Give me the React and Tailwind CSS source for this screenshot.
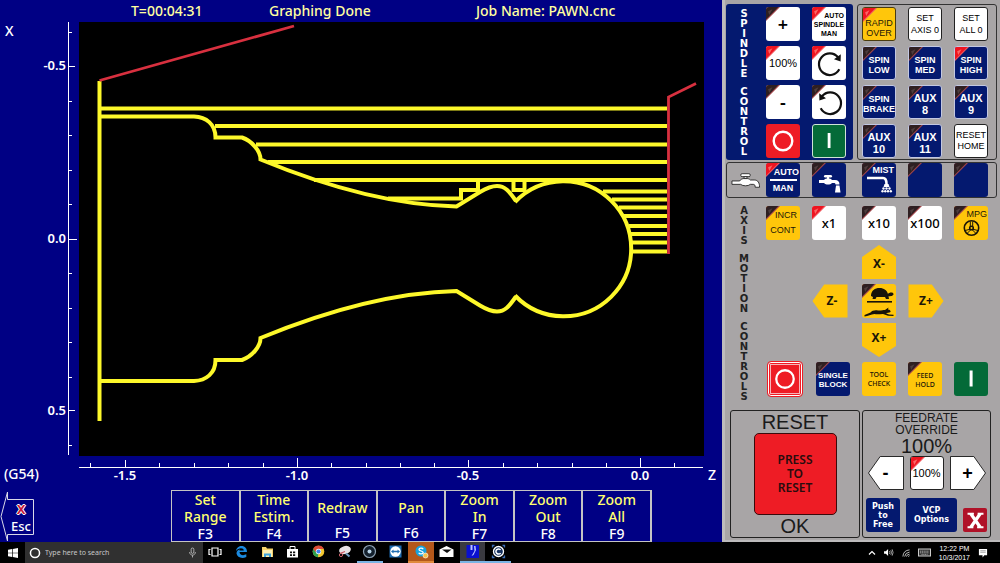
import React from "react";
import clsx from "clsx";

const TONES = {
  white: "bg-white text-black",
  outlined: "bg-white text-black border border-[#222]",
  navy: "bg-[#04196f] text-white border border-[#c3c8e2]",
  flatNavy: "bg-[#04196f] text-white",
  yellow: "bg-[#ffc60b] text-[#1c1608]",
  outlinedYellow: "bg-[#ffc60b] text-[#1c1608] border border-[#4a3c10]",
  red: "bg-[#ee1c25] text-white",
  green: "bg-[#046a38] text-white",
};

function Led({ on }) {
  return (
    <svg viewBox="0 0 13 13" className="absolute left-0 top-0 size-[14px]" aria-hidden="true">
      <path d="M0 0H13L0 13Z" fill={on ? "#f0565c" : "#a0454b"} />
      <path d="M0 0H11.500L0 11.500Z" fill={on ? "#ee1420" : "#2e1f21"} />
      <path d="M2 4L6 2L3 7.500Z" fill={on ? "#ff8a84" : "#5b4a4c"} opacity="0.7" />
    </svg>
  );
}

function Key({ tone = "white", led, label, className, children }) {
  return (
    <button
      type="button"
      aria-label={label}
      className={clsx(
        "relative flex size-[34px] flex-col items-center justify-center overflow-hidden whitespace-nowrap rounded-[3px]",
        TONES[tone],
        className
      )}
    >
      {led && <Led on={led === "on"} />}
      {children}
    </button>
  );
}

function Lines({ items, className }) {
  return (
    <span className={clsx("relative flex flex-col items-center", className)}>
      {items.map((t) => (
        <span key={t}>{t}</span>
      ))}
    </span>
  );
}

function VerticalLabel({ words, className }) {
  return (
    <h2
      className={clsx(
        "mr-1 flex w-9 flex-col items-center gap-2 font-['DejaVu_Sans',sans-serif] text-[10px] font-bold leading-[10px]",
        className
      )}
    >
      {words.map((w) => (
        <span key={w} className="w-[10px] break-all text-center">
          {w}
        </span>
      ))}
    </h2>
  );
}

function SpinArrow({ reverse }) {
  return (
    <svg viewBox="0 0 34 34" className="absolute inset-0 size-full" aria-hidden="true">
      <g transform={reverse ? "translate(36 0) scale(-1 1)" : undefined}>
        <path d="M27.3 23.3A10.8 10.8 0 1 1 26 11.2" fill="none" stroke="#111" strokeWidth="2.2" />
        <path d="M28.8 8.2L28.6 15.6L22 13.2Z" fill="#111" />
      </g>
    </svg>
  );
}

const StopRing = () => (
  <svg viewBox="0 0 34 34" className="absolute inset-0 size-full" aria-hidden="true">
    <circle cx="17" cy="17" r="9.3" fill="none" stroke="#fff" strokeWidth="2.4" />
  </svg>
);

const StartBar = () => (
  <svg viewBox="0 0 34 34" className="absolute inset-0 size-full" aria-hidden="true">
    <rect x="15.6" y="8.5" width="3" height="16" fill="#fff" />
  </svg>
);

function JogKey({ dir, tone, label, className }) {
  const shapes = {
    up: "M17 0L34 12V34H0V12Z",
    down: "M0 0H34V23L17 34L0 23Z",
    left: "M0 17L12 0H36V34H12Z",
    right: "M0 0H24L36 17L24 34H0Z",
  };
  const wide = dir === "left" || dir === "right";
  return (
    <button
      type="button"
      className={clsx("relative flex h-[34px] items-center justify-center", wide ? "w-[36px]" : "w-[34px]", className)}
    >
      <svg viewBox={wide ? "-0.5 -0.5 37 35" : "0 0 34 34"} preserveAspectRatio="none" className="absolute inset-0 size-full" aria-hidden="true">
        <path d={shapes[dir]} fill={tone === "white" ? "#fff" : "#ffc60b"} stroke={tone === "white" ? "#222" : "none"} />
      </svg>
      <span className="relative">{label}</span>
    </button>
  );
}

/* ---------- graph ---------- */

const X_TICKS_MINOR = [90, 159, 194, 228, 263, 331, 366, 400, 434, 503, 537, 572, 606, 674];
const Y_TICKS_MINOR = [32, 101, 135, 170, 204, 273, 308, 342, 377, 445];
const PASSES = [
  [99, 108.5], [215, 126], [256, 144.5], [268, 162], [314, 180],
  [603, 191.5], [612, 199.5], [619, 207.5], [624, 216], [629, 226], [630, 234], [631, 242.5], [631, 251.5],
];
const PROFILE =
  "M99 116.5H194C206 117 215.5 124 215.5 137.5H242C252 141 260.5 151 260.5 159.5C320 184 390 205 456.5 206.5L480 192Q490 186 497 186C505 186 509 191 516 201";

function Graph() {
  return (
    <svg
      viewBox="0 22 722 465"
      className="block h-auto w-full font-['Noto_Sans',sans-serif]"
      role="img"
      aria-label="Tool path graph of PAWN.cnc"
    >
      <rect x="79" y="22" width="625" height="434" fill="#000" />
      <g stroke="#fff" strokeWidth="1">
        <path d="M68.5 22V455M68.5 66.5H75M68.5 239.5H77M68.5 410.5H75" />
        {Y_TICKS_MINOR.map((y) => <path key={y} d={`M68.5 ${y + 0.5}H72`} />)}
        <path d="M79 467.5H703M125.5 460V467M297.5 458V467M468.5 460V467M640.5 458V467" />
        {X_TICKS_MINOR.map((x) => <path key={x} d={`M${x + 0.5} 463V467`} />)}
      </g>
      <g fill="#fff" fontSize="13" fontWeight="600">
        <g textAnchor="end">
          <text x="66" y="70">-0.5</text>
          <text x="66" y="243">0.0</text>
          <text x="66" y="415">0.5</text>
        </g>
        <g textAnchor="middle">
          <text x="125" y="480">-1.5</text>
          <text x="297" y="480">-1.0</text>
          <text x="468" y="480">-0.5</text>
          <text x="640" y="480">0.0</text>
        </g>
      </g>
      <g fill="#fff" fontSize="14" fontWeight="500">
        <text x="5" y="36">X</text>
        <text x="708" y="480">Z</text>
        <text x="4" y="479">(G54)</text>
      </g>
      <g fill="none" stroke="#fdf82a" strokeWidth="4">
        <path d="M99.5 81V421" />
        {PASSES.map(([x, y]) => <path key={y} d={`M${x} ${y}H667`} />)}
        <path d={PROFILE} />
        <path d={PROFILE} transform="translate(0 497.5) scale(1 -1)" />
        <path d="M515 202A67.5 67.5 0 1 1 515 295.5" />
        <path d="M388 198.5H461V190H478V180M513.5 180V190H524.5V180" />
      </g>
      <path d="M99.5 80.5L294 26M668.5 254V97L696 83.5" fill="none" stroke="#d8303f" strokeWidth="2.8" />
    </svg>
  );
}

const FUNCTION_KEYS = [
  ["F3", ["Set", "Range"]],
  ["F4", ["Time", "Estim."]],
  ["F5", ["Redraw"]],
  ["F6", ["Pan"]],
  ["F7", ["Zoom", "In"]],
  ["F8", ["Zoom", "Out"]],
  ["F9", ["Zoom", "All"]],
];

function GraphScreen() {
  return (
    <main className="flex min-w-0 flex-1 flex-col bg-[#000084] font-['Noto_Sans',sans-serif]">
      <header className="grid h-[22px] grid-cols-[138px_207px_auto] items-center pl-[131px] text-[14px] font-medium leading-[20px] text-[#ffffa0]">
        <span>T=00:04:31</span>
        <span>Graphing Done</span>
        <span>Job Name: PAWN.cnc</span>
      </header>
      <Graph />
      <div className="mt-auto grid grid-cols-[171px_1fr_70px] pt-[3px]">
        <button type="button" className="relative flex h-[52px] w-[35px] flex-col items-center justify-center pl-[7px] pt-1 text-white">
          <svg viewBox="0 0 35 52" className="absolute inset-0 size-full" aria-hidden="true">
            <path d="M1 26.5L7.5 2V9.5H33.500V44.500H7.500V51Z" fill="none" stroke="#d8d8e8" />
          </svg>
          <span className="relative text-[13px] font-bold leading-[17px] text-[#c8193c] [text-shadow:1px_0_#fff,-1px_0_#fff,0_1px_#fff,0_-1px_#fff]">X</span>
          <span className="relative text-[13px] font-medium leading-[17px]">Esc</span>
        </button>
        <div className="grid grid-cols-7 border-l border-[#c4c4c4]">
          {FUNCTION_KEYS.map(([key, label]) => (
            <button
              key={key}
              type="button"
              className="flex h-[52px] flex-col items-center border-y border-r-2 border-[#c4c4c4] text-[14px] font-medium leading-[17px] text-[#ffff70]"
            >
              <span className="flex h-[34px] flex-col items-center justify-center">
                {label.map((l) => <span key={l}>{l}</span>)}
              </span>
              <span className="text-white">{key}</span>
            </button>
          ))}
        </div>
      </div>
    </main>
  );
}

/* ---------- operator panel ---------- */

const GRID = "grid grid-cols-[34px_38px_34px_34px_34px] content-start gap-x-3 gap-y-[5px]";

const FAUCET = "M1 13H9C10 11 12 10.500 14 10.500H16C18 10.500 19 11 20 12H24C28 12 29.500 15 29.500 19.500H25C25 17.500 24.500 16.500 23 16.500H20C18 18.500 12 18.500 10 16.500H1Z";

function SpindleSection() {
  const sign = "relative font-['Noto_Sans',sans-serif] text-[18px] font-semibold leading-[20px]";
  return (
    <section className="flex rounded-[3px] bg-[#04196f] pb-[2px] pr-[7px] pt-[3px]">
      <VerticalLabel words={["SPINDLE", "CONTROL"]} className="pt-[2px] text-white" />
      <div className="grid grid-cols-2 gap-x-3 gap-y-[5px]">
        <Key led="off"><span className={sign}>+</span></Key>
        <Key led="on">
          <span className="relative flex w-full flex-col text-center text-[7px] font-bold leading-[9px]">
            <span className="pr-[2px] text-right">AUTO</span>
            <span>SPINDLE</span>
            <span>MAN</span>
          </span>
        </Key>
        <Key led="on"><span className="relative text-[11px]">100%</span></Key>
        <Key led="on" label="Spindle clockwise"><SpinArrow /></Key>
        <Key led="off"><span className={sign}>-</span></Key>
        <Key led="off" label="Spindle counter-clockwise"><SpinArrow reverse /></Key>
        <Key tone="red" label="Spindle stop"><StopRing /></Key>
        <Key tone="green" label="Spindle start" className="border border-[#cfe3d6]"><StartBar /></Key>
      </div>
    </section>
  );
}

function AuxSection() {
  const bold = "text-[9px] font-bold leading-[10px] pt-1";
  const aux = "text-[11px] font-bold leading-[12px] pt-1";
  return (
    <section className="flex-1 rounded-[3px] border border-[#333] pb-px pl-1 pt-[2px]">
      <div className="grid grid-cols-[34px_34px_34px] gap-x-3 gap-y-[5px]">
        <Key tone="outlinedYellow" led="on"><Lines items={["RAPID", "OVER"]} className="pt-2 text-[9px] leading-[10px]" /></Key>
        <Key tone="outlined"><Lines items={["SET", "AXIS 0"]} className="text-[9px] leading-[12px]" /></Key>
        <Key tone="outlined"><Lines items={["SET", "ALL 0"]} className="text-[9px] leading-[12px]" /></Key>
        <Key tone="navy" led="off"><Lines items={["SPIN", "LOW"]} className={bold} /></Key>
        <Key tone="navy" led="off"><Lines items={["SPIN", "MED"]} className={bold} /></Key>
        <Key tone="navy" led="on"><Lines items={["SPIN", "HIGH"]} className={bold} /></Key>
        <Key tone="navy" led="off"><Lines items={["SPIN", "BRAKE"]} className={bold} /></Key>
        <Key tone="navy" led="off"><Lines items={["AUX", "8"]} className={aux} /></Key>
        <Key tone="navy" led="off"><Lines items={["AUX", "9"]} className={aux} /></Key>
        <Key tone="navy" led="off"><Lines items={["AUX", "10"]} className={aux} /></Key>
        <Key tone="navy" led="off"><Lines items={["AUX", "11"]} className={aux} /></Key>
        <Key tone="outlined"><Lines items={["RESET", "HOME"]} className="text-[9px] leading-[11px]" /></Key>
      </div>
    </section>
  );
}

function CoolantSection() {
  return (
    <section className="mt-[2px] flex items-center rounded-[3px] border border-[#333]">
      <div className="flex w-[39px] justify-center pr-[1px]">
        <svg viewBox="0 0 31 24" className="h-[24px] w-[30px]" aria-label="Coolant">
          <g fill="#fff" stroke="#222" strokeWidth="0.9">
            <path d={FAUCET} />
            <path d="M13.500 10.500V8.500H16.500V10.500Z" />
            <rect x="10" y="5.500" width="10" height="3" rx="1.500" />
          </g>
        </svg>
      </div>
      <div className={GRID}>
        <Key tone="flatNavy" led="on">
          <span className="relative flex w-full flex-col items-center text-[9px] font-bold leading-[12px]">
            <span className="w-full pr-px text-right">AUTO</span>
            <span className="my-px h-[2px] w-[27px] bg-white" />
            <span>MAN</span>
          </span>
        </Key>
        <Key tone="flatNavy" led="off" label="Flood coolant">
          <svg viewBox="0 0 34 34" className="absolute inset-0 size-full" aria-hidden="true">
            <g fill="#fff">
              <path d="M7 17H12C13 15.500 14 15.500 16 15.500S19 15.500 20 17H23C26 17 27.500 18.500 27.500 21.500H23.500C23.500 20.500 23 20 22 20H20C18 22 14 22 12 20H7Z" />
              <path d="M15 16V13.500H17V16Z" />
              <rect x="12" y="12" width="8" height="2.400" rx="1.200" />
              <path d="M24 22.500H27.500L28.500 29.500H23Z" />
            </g>
          </svg>
        </Key>
        <Key tone="flatNavy" led="off">
          <svg viewBox="0 0 34 34" className="absolute inset-0 size-full" aria-hidden="true">
            <path d="M5 15H21C23.500 15 24.500 16.500 24.500 21" fill="none" stroke="#fff" strokeWidth="2.600" />
            <g fill="#fff">
              <path d="M22.500 21H26.500L27.500 24H21.500Z" />
              {[[21.5, 25.5], [24.5, 25.5], [27.5, 25.5], [20.5, 28.2], [23.3, 28.2], [26, 28.2], [28.8, 28.2]].map(([x, y]) => (
                <circle key={`${x}-${y}`} cx={x} cy={y} r="1.2" />
              ))}
            </g>
          </svg>
          <span className="relative mb-auto w-full pr-[2px] pt-[2px] text-right text-[9px] font-bold leading-[11px]">MIST</span>
        </Key>
        <Key tone="flatNavy" led="off" label="Unassigned 1" />
        <Key tone="flatNavy" led="off" label="Unassigned 2" />
      </div>
    </section>
  );
}

function SpeedKey() {
  return (
    <Key tone="yellow" led="off" label="Slow / fast jog" className="col-start-3 row-start-3">
      <svg viewBox="0 0 34 34" className="absolute inset-0 size-full" aria-hidden="true">
        <g fill="#17130a">
          <path d="M9 12C9 6.500 13 4 17.500 4S25 6.500 26 10C27 8.300 31 7.800 31.500 10C31.500 12 28.500 12.300 26.500 12.300L27 15H24L23 13H14.500L13.500 15H10.500L11 13Z" />
          <path d="M2.500 31L8.500 28.500C10 26.500 13 26 16 26.500C19 26.800 21 26 23 26L26.500 23.500L26 25.500C28 25.500 29 27 28.500 28C27 29 25 28.500 24 29.300L27 30.500L31.500 30.800V32L26 31.700L21 30C18 30 15 30.800 12.500 30C9 30.500 6 32 2.500 32.500Z" />
        </g>
        <rect x="5" y="17" width="25" height="1.600" fill="#17130a" />
      </svg>
    </Key>
  );
}

function AxisSection() {
  const num = "relative font-['Noto_Sans',sans-serif] text-[13px] font-medium leading-[18px]";
  const jog = "font-['Noto_Sans',sans-serif] text-[12px] font-bold text-[#1c1608]";
  return (
    <section className="flex pt-2">
      <VerticalLabel words={["AXIS", "MOTION", "CONTROLS"]} className="text-[#222]" />
      <div className={GRID}>
        <Key tone="yellow" led="off">
          <span className="relative flex w-full flex-col text-[9px] leading-[15px]">
            <span className="pr-[3px] text-right">INCR</span>
            <span>CONT</span>
          </span>
        </Key>
        <Key led="on"><span className={num}>x1</span></Key>
        <Key led="off"><span className={num}>x10</span></Key>
        <Key led="off"><span className={num}>x100</span></Key>
        <Key tone="yellow" led="off">
          <span className="relative mb-auto w-full pr-px pt-[3px] text-right text-[9px] leading-[11px]">MPG</span>
          <svg viewBox="0 0 34 34" className="absolute inset-0 size-full" aria-hidden="true">
            <g fill="none" stroke="#1c1608" strokeWidth="1.600">
              <circle cx="17.500" cy="22" r="7.200" />
              <circle cx="17.500" cy="22" r="1.800" />
              <path d="M16.300 15.500V20.500M18.700 15.500V20.500M11 24.500L16 23.300M13 27.500L16.500 24M24 24.500L19 23.300M22 27.500L18.500 24" strokeWidth="1" />
            </g>
          </svg>
        </Key>

        <JogKey dir="up" label="X-" className={clsx(jog, "col-start-3 row-start-2 pt-1")} />
        <JogKey dir="left" label="Z-" className={clsx(jog, "col-start-2 row-start-3 pl-1")} />
        <SpeedKey />
        <JogKey dir="right" label="Z+" className={clsx(jog, "col-start-4 row-start-3")} />
        <JogKey dir="down" label="X+" className={clsx(jog, "col-start-3 row-start-4 pb-1")} />

        <Key tone="red" label="Cycle cancel" className="row-start-5 ml-[2px] border border-white outline-1 outline-[#ee1c25]">
          <span className="absolute inset-[1px] border border-[#f7b4b8]" />
          <StopRing />
        </Key>
        <Key tone="flatNavy" led="off" className="ml-1 row-start-5"><Lines items={["SINGLE", "BLOCK"]} className="pt-[2px] text-[8px] font-bold leading-[9px]" /></Key>
        <Key tone="yellow" className="row-start-5"><Lines items={["TOOL", "CHECK"]} className="font-['Noto_Sans',sans-serif] text-[7px] font-medium leading-[9px]" /></Key>
        <Key tone="yellow" led="off" className="row-start-5"><Lines items={["FEED", "HOLD"]} className="pt-[2px] font-['Noto_Sans',sans-serif] text-[7px] font-medium leading-[9px]" /></Key>
        <Key tone="green" label="Cycle start" className="row-start-5"><StartBar /></Key>
      </div>
    </section>
  );
}

function ResetSection() {
  return (
    <section className="flex w-[130px] flex-col items-center rounded-[3px] border border-[#222] text-[#1a1a1a]">
      <h2 className="text-[20px] leading-[22px]">RESET</h2>
      <button
        type="button"
        className="flex size-[83px] flex-col items-center justify-center rounded-[5px] border border-[#3a0a0c] bg-[#ee1c25] font-['Noto_Sans',sans-serif] text-[12px] font-semibold leading-[14px] text-[#2a0c0e]"
      >
        <span>PRESS</span>
        <span>TO</span>
        <span>RESET</span>
      </button>
      <p className="text-[20px] leading-[22px]">OK</p>
    </section>
  );
}

function FeedrateSection() {
  const heavy = "font-['DejaVu_Sans',sans-serif] text-[8px] font-bold leading-[9px]";
  return (
    <section className="flex w-[129px] flex-col items-center rounded-[3px] border border-[#222] px-1 text-[#1a1a1a]">
      <h2 className="flex flex-col items-center pt-px text-[12px] leading-[12px]">
        <span>FEEDRATE</span>
        <span>OVERRIDE</span>
      </h2>
      <output className="text-[20px] leading-[20px]">100%</output>
      <div className="flex gap-[6px] text-[18px] font-bold leading-none text-black">
        <JogKey dir="left" tone="white" label="-" />
        <Key tone="outlined" led="on" className="font-normal"><span className="relative text-[11px]">100%</span></Key>
        <JogKey dir="right" tone="white" label="+" />
      </div>
      <div className="mt-2 flex items-end gap-[6px]">
        <Key tone="flatNavy"><Lines items={["Push", "to", "Free"]} className={heavy} /></Key>
        <Key tone="flatNavy" className="w-[51px]"><Lines items={["VCP", "Options"]} className={heavy} /></Key>
        <button type="button" className="flex size-[24px] items-center justify-center rounded-[2px] bg-[#b01228]" aria-label="Close panel">
          <svg viewBox="0 0 16 16" className="size-[17px]" aria-hidden="true">
            <path d="M3.500 1.500L12.500 14.500M12.500 1.500L3.500 14.500" stroke="#fff" strokeWidth="3.200" />
            <path d="M.5 1.700H6.500M10 1.700H15.500M.5 14.300H6M9.500 14.300H15.500" stroke="#fff" strokeWidth="1.800" />
          </svg>
        </button>
      </div>
    </section>
  );
}

function OperatorPanel() {
  return (
    <aside className="w-[278px] shrink-0 border-b-2 border-l-[3px] border-[#bdbbbc] bg-[#a8a5a6] pb-[2px] pl-px pr-[3px] pt-1 font-['Liberation_Sans',sans-serif]">
      <div className="flex gap-1">
        <SpindleSection />
        <AuxSection />
      </div>
      <CoolantSection />
      <AxisSection />
      <div className="ml-1 mt-2 flex h-[128px] gap-[2px]">
        <ResetSection />
        <FeedrateSection />
      </div>
    </aside>
  );
}

/* ---------- taskbar ---------- */

const APPS = [
  { name: "Task view", art: <path d="M4 4H10V12H4ZM2.500 5.500H1V10.500H2.500M11.500 5.500H13V10.500H11.500" fill="none" stroke="#fff" strokeWidth="1.200" /> },
  { name: "Edge", art: <path d="M2 7C2.500 3.500 5 2 7.500 2C11 2 13 4.500 13 8H5.500C5.500 11 9 12 12.300 10.300V13C8 15 3 13.500 2.500 9.500C2.500 7.500 4 6 5.800 5.300C5.500 6 5.400 6.300 5.400 6.600H9.800C9.600 3.300 4.500 3.500 2 7Z" fill="#1b8ae0" /> },
  { name: "File Explorer", art: <g><path d="M2 3H6L7 4.500H13V13H2Z" fill="#f5d26a" /><path d="M3 6H12V13H3Z" fill="#fdf0b6" /><path d="M4 9.500H11V13H9V11.500H6V13H4Z" fill="#3fa4dc" /></g> },
  { name: "Store", art: <g><path d="M2 5H13V13.500H2Z" fill="#fff" /><path d="M5 5V2.500H10V5" fill="none" stroke="#fff" /><path d="M5 7.500H7V9.300H5ZM8 7.500H10.200V9.300H8ZM5 10.200H7V12H5ZM8 10.200H10.200V12H8Z" fill="#111" /></g> },
  { name: "Chrome", art: <g><circle cx="7.500" cy="7.500" r="5.800" fill="#f2c62f" /><path d="M7.500 7.500L2.500 4.600A5.800 5.800 0 0 0 7 13.300Z" fill="#2fa04e" /><path d="M2.300 4.900A5.800 5.800 0 0 1 12.800 5H7.500L4.500 8Z" fill="#dd4b39" /><circle cx="7.500" cy="7.500" r="2.700" fill="#fff" /><circle cx="7.500" cy="7.500" r="2.100" fill="#3f83f0" /></g> },
  { name: "Snipping Tool", art: <g><ellipse cx="8" cy="6" rx="6" ry="4" fill="#e9e4e6" transform="rotate(-15 8 6)" /><path d="M3 9.500L8 7.500" stroke="#c8505c" strokeWidth="1.200" /><circle cx="4" cy="11" r="1.600" fill="none" stroke="#d0656f" /><path d="M9 9.500L12.500 12.500" stroke="#6f9cc4" strokeWidth="2" /></g> },
  { name: "Recorder", open: true, art: <g><circle cx="7.500" cy="7.500" r="6" fill="#13202d" stroke="#8fa3b5" strokeWidth="1.200" /><circle cx="7.500" cy="7.500" r="2" fill="#b9d4e8" /></g> },
  { name: "TeamViewer", art: <g><rect x="1.500" y="1.500" width="12" height="12" fill="#1f6db3" /><circle cx="7.500" cy="7.500" r="5.200" fill="#fff" /><path d="M3 7.500L5.500 5.500V6.800H9.500V5.500L12 7.500L9.500 9.500V8.200H5.500V9.500Z" fill="#1f6db3" /></g> },
  { name: "Skype", open: true, cell: "bg-[#b4581a]", line: "border-[#e08a3c]", art: <g><circle cx="7" cy="7" r="5.500" fill="#18a3dd" /><path d="M9.200 5.200C8.500 3.700 5 3.800 5 5.500S9.200 6.800 9.200 8.500S5.500 10.500 4.800 8.800" fill="none" stroke="#fff" strokeWidth="1.300" /><circle cx="11.500" cy="11.500" r="2.500" fill="#f6c04a" stroke="#fff" strokeWidth="0.600" /></g> },
  { name: "Mail", art: <g><path d="M0.500 5.500L7.500 2L14.500 5.500V13H0.500Z" fill="#fff" /><path d="M3 5.500H12.500L8 9Z" fill="#111" /></g> },
  { name: "CNC Control", open: true, cell: "bg-[#3a3a40]", art: <g><rect x="1.500" y="1" width="12.500" height="13" fill="#0910d0" /><path d="M5.500 1V6H7.500V1ZM9 2L9.500 7L6.500 12L8.500 11L11 6L10.500 2Z" fill="#b9c2ff" /></g> },
  { name: "Camtasia", open: true, art: <g><path d="M1.500 3.500V1.500H3.500M11.500 1.500H13.500V3.500M13.500 11.500V13.500H11.500M3.500 13.500H1.500V11.500" fill="none" stroke="#3d6fb8" strokeWidth="1.300" /><circle cx="7.500" cy="7.500" r="5" fill="#15305f" stroke="#fff" strokeWidth="1.300" /><path d="M9.600 5.900A2.600 2.600 0 1 0 9.600 9.100" fill="none" stroke="#fff" strokeWidth="1.500" /></g> },
];

function Taskbar() {
  return (
    <footer className="flex h-[21px] items-stretch bg-black font-['Noto_Sans',sans-serif] text-white">
      <button type="button" aria-label="Start" className="flex w-[25px] items-center justify-center">
        <svg viewBox="0 0 12 12" className="size-[10px]" aria-hidden="true">
          <path d="M0 2L5 1.200V5.600H0ZM5.800 1.100L12 0V5.600H5.800ZM0 6.400H5V10.800L0 10ZM5.800 6.400H12V12L5.800 10.900Z" fill="#fff" />
        </svg>
      </button>
      <label className="flex w-[178px] items-center bg-[#303030] pl-1">
        <svg viewBox="0 0 14 14" className="size-[12px]" aria-hidden="true">
          <circle cx="7" cy="7" r="5.300" fill="none" stroke="#fff" strokeWidth="1.800" />
        </svg>
        <input
          type="text"
          aria-label="Search"
          placeholder="Type here to search"
          className="ml-1 w-full min-w-0 flex-1 bg-transparent text-[7px] leading-[14px] text-white outline-none placeholder:text-[#c8c8c8]"
        />
        <svg viewBox="0 0 10 12" className="mr-[6px] h-[11px] w-[9px]" aria-hidden="true">
          <g fill="none" stroke="#bbb">
            <rect x="3.500" y="1" width="3" height="6" rx="1.500" />
            <path d="M1.800 5.500C1.800 10 8.200 10 8.200 5.500M5 9V11.500" />
          </g>
        </svg>
      </label>
      <nav className="flex w-[308px]">
        {APPS.map(({ name, art, open, cell, line = "border-[#7ab4e4]" }) => (
          <button
            key={name}
            type="button"
            aria-label={name}
            className={clsx("flex flex-1 items-center justify-center border-b-2", open ? line : "border-transparent", cell)}
          >
            <svg viewBox="0 0 15 15" className="size-[15px]" aria-hidden="true">{art}</svg>
          </button>
        ))}
      </nav>
      <div className="ml-auto flex items-center gap-2 pr-3">
        <svg viewBox="0 0 8 8" className="size-[8px]" aria-label="Show hidden icons"><path d="M1 5.500L4 2.500L7 5.500" fill="none" stroke="#fff" strokeWidth="1.200" /></svg>
        <svg viewBox="0 0 11 10" className="h-[9px] w-[10px]" aria-label="Volume"><path d="M0 3.500H2L4.500 1V9L2 6.500H0Z" fill="#fff" /><path d="M6 3.500Q7 5 6 6.500M7.500 2.500Q9 5 7.500 7.500M9 1.500Q11 5 9 8.500" fill="none" stroke="#ddd" strokeWidth="0.800" /></svg>
        <svg viewBox="0 0 9 9" className="size-[8px]" aria-label="Network"><path d="M1 8.500Q1.500 1.500 8.500 1M3 8.500Q3.500 4 8.500 3.500M5 8.500Q5.500 6 8.500 5.800M7 8.500L8.500 7.500" fill="none" stroke="#ccc" /></svg>
        <svg viewBox="0 0 13 9" className="h-[9px] w-[13px]" aria-label="Keyboard"><rect x="0.500" y="1" width="12" height="7" fill="#333" stroke="#ccc" /><path d="M2 3.200H11M2 4.800H11M3.500 6.400H9.500" stroke="#bbb" strokeWidth="0.800" strokeDasharray="1.200 0.600" /></svg>
        <div className="flex flex-col items-center font-['Liberation_Sans',sans-serif] text-[7px] leading-[9px]">
          <span>12:22 PM</span>
          <span>10/3/2017</span>
        </div>
        <svg viewBox="0 0 11 11" className="size-[10px]" aria-label="Notifications"><path d="M1 1H10V8H7L5 10.500V8H1Z" fill="#fff" /><path d="M2.500 3H8.500M2.500 4.700H8.500" stroke="#777" strokeWidth="0.700" /></svg>
      </div>
    </footer>
  );
}

export default function App() {
  return (
    <div className="flex min-h-screen flex-col bg-black">
      <div className="flex flex-1">
        <GraphScreen />
        <OperatorPanel />
      </div>
      <Taskbar />
    </div>
  );
}
